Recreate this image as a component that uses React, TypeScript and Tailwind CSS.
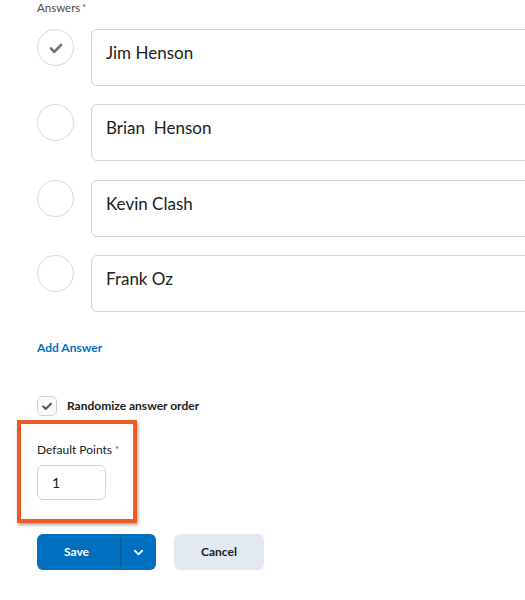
import React from "react";

const answers = [
  { text: "Jim Henson", correct: true },
  { text: "Brian  Henson", correct: false },
  { text: "Kevin Clash", correct: false },
  { text: "Frank Oz", correct: false },
];

const Check: React.FC<{ className?: string; color?: string }> = ({
  className,
  color = "#6e7376",
}) => (
  <svg viewBox="0 0 18 18" className={className} fill="none">
    <path
      d="M4 9.5 L7.3 12.8 L14 6"
      stroke={color}
      strokeWidth="2.6"
      strokeLinecap="round"
      strokeLinejoin="round"
    />
  </svg>
);

const AnswerRow: React.FC<{ text: string; correct: boolean }> = ({
  text,
  correct,
}) => (
  <div className="flex items-start gap-[17px]">
    <div className="w-[37px] h-[37px] rounded-full border border-[#d3d9e3] bg-white flex items-center justify-center shrink-0">
      {correct && <Check className="w-[18px] h-[18px]" />}
    </div>
    <div className="h-[57px] w-[460px] shrink-0 rounded-[6px] border border-[#cdd5dc] bg-white pl-[14px] pt-[10px] text-[17px] text-[#202122] whitespace-pre">
      {text}
    </div>
  </div>
);

export default function App() {
  return (
    <div
      className="w-[525px] h-[600px] overflow-hidden bg-white pl-[37px]"
      style={{ fontFamily: "Lato, 'Noto Sans', sans-serif" }}
    >
      <div className="pt-[1px] text-[11.5px] leading-[14px] text-[#494c4e]">
        Answers<span className="ml-[2px] text-[9px] align-top">*</span>
      </div>

      <div className="mt-[14px] flex flex-col gap-[18.4px]">
        {answers.map((a) => (
          <AnswerRow key={a.text} text={a.text} correct={a.correct} />
        ))}
      </div>

      <div className="mt-[29px] text-[12px] font-bold leading-[14px] text-[#006fbf]">
        Add Answer
      </div>

      <div className="mt-[41px] flex items-center gap-[10px]">
        <div className="w-[20px] h-[20px] rounded-[5px] border border-[#cdd5dc] bg-[#f8fafc] flex items-center justify-center">
          <Check className="w-[14px] h-[14px]" color="#565a5c" />
        </div>
        <span className="text-[12px] font-bold text-[#202122]">
          Randomize answer order
        </span>
      </div>

      <div className="mt-[4px] -ml-[20px] w-[120px] h-[103px] border-4 border-[#f15a24] shadow-[1px_2px_3px_rgba(0,0,0,0.35)] pl-[16px] pt-[19px]">
        <div className="text-[12px] leading-[14px] text-[#202122]">
          Default Points<span className="ml-[3px] text-[9px] align-top text-[#494c4e]">*</span>
        </div>
        <div className="mt-[8px] w-[69px] h-[35px] rounded-[6px] border border-[#cdd5dc] bg-white pl-[14px] flex items-center text-[14px] text-[#202122]">
          1
        </div>
      </div>

      <div className="mt-[11px] flex items-center gap-[18px]">
        <div className="flex h-[36px] w-[119px] rounded-[6px] bg-[#006fbf] overflow-hidden">
          <div className="flex-1 flex items-center justify-center text-[12px] font-bold text-white pr-[4px]">
            Save
          </div>
          <div className="w-[36px] border-l border-[#0a5a98] flex items-center justify-center">
            <svg viewBox="0 0 12 12" className="w-[11px] h-[11px]" fill="none">
              <path
                d="M2 4 L6 8 L10 4"
                stroke="white"
                strokeWidth="2"
                strokeLinecap="round"
                strokeLinejoin="round"
              />
            </svg>
          </div>
        </div>
        <div className="h-[36px] w-[90px] rounded-[6px] bg-[#e3e9f1] flex items-center justify-center text-[12px] font-bold text-[#202122]">
          Cancel
        </div>
      </div>
    </div>
  );
}
